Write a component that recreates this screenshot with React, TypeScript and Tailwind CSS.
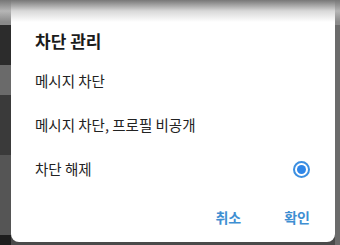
const options = ["메시지 차단", "메시지 차단, 프로필 비공개", "차단 해제"];

function Radio({ checked }: { checked: boolean }) {
  return (
    <span
      className={
        checked
          ? "flex h-[17px] w-[17px] items-center justify-center rounded-full border-2 border-[#3c8fe0]"
          : "h-[17px] w-[17px] rounded-full border-2 border-transparent"
      }
    >
      {checked && <span className="h-[9px] w-[9px] rounded-full bg-[#2f86e8]" />}
    </span>
  );
}

export default function App() {
  const selected = 2;

  return (
    <div
      className="relative flex h-[245px] w-[340px] overflow-hidden bg-[#4a4a4a]"
      style={{ fontFamily: '"Noto Sans CJK KR", "Noto Sans", sans-serif' }}
    >
      {/* blurred backdrop strips */}
      <div className="flex w-[11px] flex-col">
        <div className="h-[25px] bg-[#8a8a8a]" />
        <div className="h-[40px] bg-[#2c2c2c]" />
        <div className="h-[30px] bg-[#6a6a6a]" />
        <div className="h-[60px] bg-[#3a3a3a]" />
        <div className="flex-1 bg-[#555555]" />
        <div className="h-[10px] bg-[#1e1e1e]" />
      </div>

      <div className="flex h-[242px] w-[324px] flex-col rounded-b-lg bg-white pl-[24px] pr-[25px]">
        <div className="pt-[29px] text-[17px] font-bold leading-[24px] text-[#1b1b1b]">차단 관리</div>
        <div className="mt-[6px] flex flex-col">
          {options.map((label, i) => (
            <div key={label} className="flex h-[44px] items-center justify-between">
              <span className="text-[14.5px] leading-[20px] text-[#222222]">{label}</span>
              <Radio checked={i === selected} />
            </div>
          ))}
        </div>
        <div className="mt-[16px] flex justify-end gap-[43px] text-[14px] font-bold leading-[20px] text-[#3f8fd2]">
          <span>취소</span>
          <span>확인</span>
        </div>
      </div>

      <div className="flex w-[5px] flex-col">
        <div className="h-[25px] bg-[#8a8a8a]" />
        <div className="flex-1 bg-[#6b6b6b]" />
      </div>

      {/* top edge shadow fading into the dialog */}
      <div className="pointer-events-none absolute inset-x-0 top-0 h-[22px] bg-gradient-to-b from-[#777777] via-[#c8c8c8]/70 to-transparent" />
    </div>
  );
}
